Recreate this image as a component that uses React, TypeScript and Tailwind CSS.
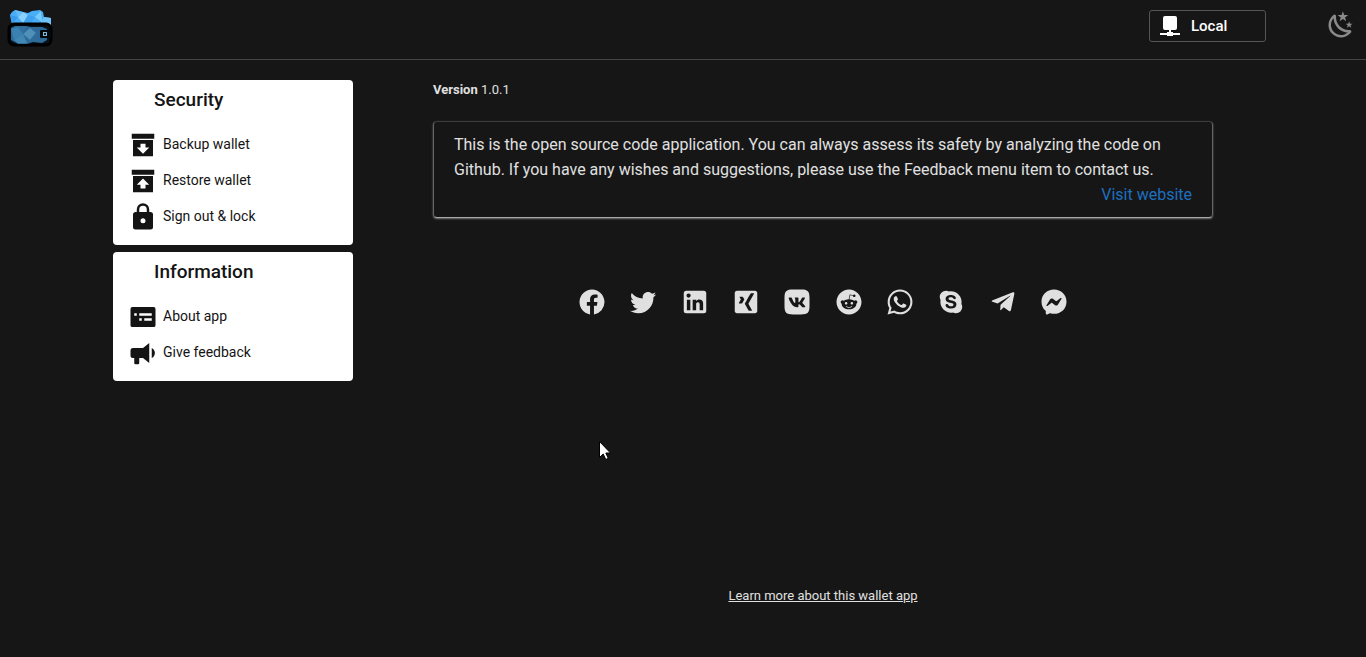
import React from "react";
import { FaTelegramPlane } from "react-icons/fa";

const paths = {
  backup: "M3 3H21V7H3V3M4 8H20V21H4V8M14 14V11H10V14H7L12 19L17 14H14Z",
  restore: "M20 21H4V8H20V21M3 3H21V7H3V3M14 18V15H17L12 10L7 15H10V18H14Z",
  lock: "M12,17A2,2 0 0,0 14,15C14,13.89 13.1,13 12,13A2,2 0 0,0 10,15A2,2 0 0,0 12,17M18,8A2,2 0 0,1 20,10V20A2,2 0 0,1 18,22H6A2,2 0 0,1 4,20V10C4,8.89 4.9,8 6,8H7V6A5,5 0 0,1 12,1A5,5 0 0,1 17,6V8H18M12,3A3,3 0 0,0 9,6V8H15V6A3,3 0 0,0 12,3Z",
  about: "M3.5 4H20.5A1.5 1.5 0 0 1 22 5.500V18.500A1.500 1.500 0 0 1 20.500 20H3.500A1.500 1.500 0 0 1 2 18.500V5.500A1.500 1.500 0 0 1 3.500 4M5 9V11H7V9H5M9 9V11H19V9H9M9 13V15H11V13H9M13 13V15H19V13H13Z",
  feedback: "M12,8H4A2,2 0 0,0 2,10V14A2,2 0 0,0 4,16H5V20A1,1 0 0,0 6,21H8A1,1 0 0,0 9,20V16H12L17,20V4L12,8M21.5,12C21.5,13.71 20.54,15.26 19,16V8C20.53,8.75 21.5,10.3 21.5,12Z",
  night: "M17.75,4.09L15.22,6.03L16.13,9.09L13.5,7.28L10.87,9.09L11.78,6.03L9.25,4.09L12.44,4L13.5,1L14.56,4L17.75,4.09M21.25,11L19.61,12.25L20.2,14.23L18.5,13.06L16.8,14.23L17.39,12.25L15.75,11L17.81,10.95L18.5,9L19.19,10.95L21.25,11M18.97,15.95C19.8,15.87 20.69,17.05 20.16,17.8C19.84,18.25 19.5,18.67 19.08,19.07C15.17,23 8.84,23 4.94,19.07C1.03,15.17 1.03,8.83 4.94,4.93C5.34,4.53 5.76,4.17 6.21,3.85C6.96,3.32 8.14,4.21 8.06,5.04C7.79,7.9 8.75,10.87 10.95,13.06C13.14,15.26 16.1,16.24 18.97,15.95M17.33,17.97C14.5,17.81 11.7,16.64 9.53,14.5C7.36,12.31 6.2,9.5 6.04,6.68C3.23,9.82 3.34,14.64 6.35,17.66C9.37,20.67 14.19,20.78 17.33,17.97Z",
  facebook: "M12 2.04C6.5 2.04 2 6.53 2 12.06C2 17.06 5.66 21.21 10.44 21.96V14.96H7.9V12.06H10.44V9.85C10.44 7.34 11.93 5.96 14.22 5.96C15.31 5.96 16.45 6.15 16.45 6.15V8.62H15.19C13.95 8.62 13.56 9.39 13.56 10.18V12.06H16.34L15.89 14.96H13.56V21.96A10 10 0 0 0 22 12.06C22 6.53 17.5 2.04 12 2.04Z",
  twitter: "M22.46,6C21.69,6.35 20.86,6.58 20,6.69C20.88,6.16 21.56,5.32 21.88,4.31C21.05,4.81 20.13,5.16 19.16,5.36C18.37,4.5 17.26,4 16,4C13.65,4 11.73,5.92 11.73,8.29C11.73,8.63 11.77,8.96 11.84,9.27C8.28,9.09 5.11,7.38 3,4.79C2.63,5.42 2.42,6.16 2.42,6.94C2.42,8.43 3.17,9.75 4.33,10.5C3.62,10.5 2.96,10.3 2.38,10C2.38,10 2.38,10 2.38,10.03C2.38,12.11 3.86,13.85 5.82,14.24C5.46,14.34 5.08,14.39 4.69,14.39C4.42,14.39 4.15,14.36 3.89,14.31C4.43,16 6,17.26 7.89,17.29C6.43,18.45 4.58,19.13 2.56,19.13C2.22,19.13 1.88,19.11 1.54,19.07C3.44,20.29 5.7,21 8.12,21C16,21 20.33,14.46 20.33,8.79C20.33,8.6 20.33,8.42 20.32,8.23C21.16,7.63 21.88,6.87 22.46,6Z",
  linkedin: "M19 3A2 2 0 0 1 21 5V19A2 2 0 0 1 19 21H5A2 2 0 0 1 3 19V5A2 2 0 0 1 5 3H19M18.5 18.5V13.2A3.26 3.26 0 0 0 15.24 9.94C14.39 9.94 13.4 10.46 12.92 11.24V10.13H10.13V18.5H12.92V13.57C12.92 12.8 13.54 12.17 14.31 12.17A1.4 1.4 0 0 1 15.71 13.57V18.5H18.5M6.88 8.56A1.68 1.68 0 0 0 8.56 6.88C8.56 5.95 7.81 5.19 6.88 5.19A1.69 1.69 0 0 0 5.19 6.88C5.19 7.81 5.95 8.56 6.88 8.56M8.27 18.5V10.13H5.5V18.5H8.27Z",
  xing: "M4.8,3C3.8,3 3,3.8 3,4.8V19.2C3,20.2 3.8,21 4.8,21H19.2C20.2,21 21,20.2 21,19.2V4.8C21,3.8 20.2,3 19.2,3M16.07,5H18.11C18.23,5 18.33,5.04 18.37,5.13C18.43,5.22 18.43,5.33 18.37,5.44L13.9,13.36L16.75,18.56C16.81,18.67 16.81,18.78 16.75,18.87C16.7,18.95 16.61,19 16.5,19H14.47C14.16,19 14,18.79 13.91,18.61L11.04,13.35C11.18,13.1 15.53,5.39 15.53,5.39C15.64,5.19 15.77,5 16.07,5M7.09,7.76H9.1C9.41,7.76 9.57,7.96 9.67,8.15L10.69,9.93C10.62,10.04 9.08,12.78 9.08,12.78C9,12.95 8.81,13.17 8.5,13.17H6.5C6.4,13.17 6.3,13.12 6.26,13.04C6.21,12.96 6.2,12.85 6.26,12.74L7.89,9.9L6.84,8.08C6.79,7.97 6.78,7.86 6.83,7.78C6.88,7.71 6.98,7.76 7.09,7.76Z",
  vk: "M15.07 2H8.93C3.33 2 2 3.33 2 8.93V15.07C2 20.67 3.33 22 8.93 22H15.07C20.67 22 22 20.67 22 15.07V8.93C22 3.33 20.67 2 15.07 2M18.15 16.27H16.69C16.14 16.27 15.97 15.82 15 14.83C14.12 14 13.74 13.88 13.53 13.88C13.24 13.88 13.15 13.96 13.15 14.38V15.69C13.15 16.04 13.04 16.26 12.11 16.26C10.57 16.26 8.86 15.32 7.66 13.59C5.85 11.05 5.36 9.13 5.36 8.75C5.36 8.54 5.43 8.34 5.85 8.34H7.32C7.69 8.34 7.83 8.5 7.97 8.9C8.69 10.97 9.89 12.8 10.38 12.8C10.57 12.8 10.65 12.71 10.65 12.25V10.1C10.6 9.12 10.07 9.03 10.07 8.68C10.07 8.5 10.21 8.34 10.44 8.34H12.73C13.04 8.34 13.15 8.5 13.15 8.88V11.77C13.15 12.08 13.28 12.19 13.38 12.19C13.56 12.19 13.72 12.08 14.05 11.74C15.1 10.57 15.85 8.76 15.85 8.76C15.95 8.55 16.11 8.35 16.5 8.35H17.93C18.37 8.35 18.47 8.58 18.37 8.89C18.19 9.74 16.41 12.25 16.43 12.25C16.27 12.5 16.21 12.61 16.43 12.9C16.58 13.11 17.09 13.55 17.43 13.94C18.05 14.65 18.53 15.24 18.66 15.65C18.77 16.06 18.57 16.27 18.15 16.27Z",
  reddit: "M14.5 15.41C14.58 15.5 14.58 15.69 14.5 15.8C13.77 16.5 12.41 16.56 12 16.56C11.61 16.56 10.25 16.5 9.54 15.8C9.44 15.69 9.44 15.5 9.54 15.41C9.65 15.31 9.82 15.31 9.92 15.41C10.38 15.87 11.33 16 12 16C12.69 16 13.66 15.87 14.1 15.41C14.21 15.31 14.38 15.31 14.5 15.41M10.75 13.04C10.75 12.47 10.28 12 9.71 12C9.14 12 8.67 12.47 8.67 13.04C8.67 13.61 9.14 14.09 9.71 14.08C10.28 14.08 10.75 13.61 10.75 13.04M14.29 12C13.72 12 13.25 12.5 13.25 13.05S13.72 14.09 14.29 14.09C14.86 14.09 15.33 13.61 15.33 13.05S14.86 12 14.29 12M22 12C22 17.5 17.5 22 12 22S2 17.5 2 12C2 6.5 6.5 2 12 2S22 6.5 22 12M18.67 12C18.67 11.19 18 10.54 17.22 10.54C16.82 10.54 16.46 10.7 16.2 10.95C15.2 10.23 13.83 9.77 12.3 9.71L12.97 6.58L15.14 7.05C15.16 7.6 15.62 8.04 16.18 8.04C16.75 8.04 17.22 7.57 17.22 7C17.22 6.43 16.75 5.96 16.18 5.96C15.77 5.96 15.41 6.2 15.25 6.55L12.82 6.03C12.75 6 12.68 6.03 12.63 6.07C12.57 6.11 12.54 6.17 12.53 6.24L11.79 9.72C10.24 9.77 8.84 10.23 7.82 10.96C7.56 10.71 7.2 10.56 6.81 10.56C6 10.56 5.35 11.21 5.35 12C5.35 12.61 5.71 13.11 6.21 13.34C6.19 13.5 6.18 13.62 6.18 13.78C6.18 16 8.79 17.85 12 17.85C15.23 17.85 17.85 16.03 17.85 13.78C17.85 13.64 17.84 13.5 17.81 13.34C18.31 13.11 18.67 12.6 18.67 12Z",
  whatsapp: "M12.04 2C6.58 2 2.13 6.45 2.13 11.91C2.13 13.66 2.59 15.36 3.45 16.86L2.05 22L7.3 20.62C8.75 21.41 10.38 21.83 12.04 21.83C17.5 21.83 21.95 17.38 21.95 11.92C21.95 9.27 20.92 6.78 19.05 4.91C17.18 3.03 14.69 2 12.04 2M12.05 3.67C14.25 3.67 16.31 4.53 17.87 6.09C19.42 7.65 20.28 9.72 20.28 11.92C20.28 16.46 16.58 20.15 12.04 20.15C10.56 20.15 9.11 19.76 7.85 19L7.55 18.83L4.43 19.65L5.26 16.61L5.06 16.29C4.24 15 3.8 13.47 3.8 11.91C3.81 7.37 7.5 3.67 12.05 3.67M8.53 7.33C8.37 7.33 8.1 7.39 7.87 7.64C7.65 7.89 7 8.5 7 9.71C7 10.93 7.89 12.1 8 12.27C8.14 12.44 9.76 14.94 12.25 16C12.84 16.27 13.3 16.42 13.66 16.53C14.25 16.72 14.79 16.69 15.22 16.63C15.7 16.56 16.68 16.03 16.89 15.45C17.1 14.87 17.1 14.38 17.04 14.27C16.97 14.17 16.81 14.11 16.56 14C16.31 13.86 15.09 13.26 14.87 13.18C14.64 13.1 14.5 13.06 14.31 13.3C14.15 13.55 13.67 14.11 13.53 14.27C13.38 14.44 13.24 14.46 13 14.34C12.74 14.21 11.94 13.95 11 13.11C10.26 12.45 9.77 11.64 9.62 11.39C9.5 11.15 9.61 11 9.73 10.89C9.84 10.78 10 10.6 10.1 10.45C10.23 10.31 10.27 10.2 10.35 10.04C10.43 9.87 10.39 9.73 10.33 9.61C10.27 9.5 9.77 8.26 9.56 7.77C9.36 7.29 9.16 7.35 9 7.34C8.86 7.34 8.7 7.33 8.53 7.33Z",
  skype: "M18,6C20.07,8.04 20.85,10.89 20.36,13.55C20.77,14.27 21,15.11 21,16A5,5 0 0,1 16,21C15.11,21 14.27,20.77 13.55,20.36C10.89,20.85 8.04,20.07 6,18C3.93,15.96 3.15,13.11 3.64,10.45C3.23,9.73 3,8.89 3,8A5,5 0 0,1 8,3C8.89,3 9.73,3.23 10.45,3.64C13.11,3.15 15.96,3.93 18,6M12.04,17.16C14.91,17.16 16.34,15.78 16.34,13.92C16.34,12.73 15.78,11.46 13.61,10.97L11.62,10.53C10.86,10.36 10,10.13 10,9.42C10,8.7 10.6,8.2 11.7,8.2C13.93,8.2 13.72,9.73 14.83,9.73C15.41,9.73 15.91,9.39 15.91,8.8C15.91,7.43 13.72,6.4 11.86,6.4C9.85,6.4 7.7,7.26 7.7,9.54C7.7,10.64 8.09,11.81 10.25,12.35L12.94,13.03C13.75,13.23 13.95,13.68 13.95,14.1C13.95,14.78 13.27,15.45 12.04,15.45C9.63,15.45 9.96,13.6 8.67,13.6C8.09,13.6 7.67,14 7.67,14.57C7.67,15.68 9,17.16 12.04,17.16Z",
  messenger: "M12,2C6.36,2 2,6.13 2,11.7C2,14.61 3.19,17.14 5.14,18.87C5.3,19 5.4,19.22 5.41,19.44L5.46,21.22C5.5,21.79 6.07,22.16 6.59,21.93L8.57,21.06C8.74,21 8.93,20.97 9.1,21C10,21.27 11,21.4 12,21.4C17.64,21.4 22,17.27 22,11.7C22,6.13 17.64,2 12,2M18,9.46L15.07,14.13C14.6,14.86 13.6,15.05 12.9,14.5L10.56,12.77C10.35,12.61 10.05,12.61 9.84,12.77L6.68,15.17C6.26,15.5 5.71,15 6,14.54L8.93,9.87C9.4,9.14 10.4,8.95 11.1,9.47L13.44,11.23C13.66,11.39 13.95,11.39 14.16,11.23L17.32,8.83C17.74,8.5 18.29,9 18,9.46Z",
};

type IconName = keyof typeof paths;

function Icon({ name }: { name: IconName }) {
  return (
    <svg viewBox="0 0 24 24" className="size-[30px] shrink-0 fill-current" aria-hidden="true">
      <path fillRule="evenodd" d={paths[name]} />
    </svg>
  );
}

function Logo() {
  return (
    <svg viewBox="0 0 48 40" className="h-10 w-12" aria-hidden="true">
      <path d="M4 6L6 3L9 1L17 3L22 4L26 2L34 1L37 3L38 8L45 9V16H6Z" fill="#4aaef7" />
      <path d="M4 6L12 8L7 14Z" fill="#3a9cec" />
      <path d="M12 8L17 3L22 6L17 14Z" fill="#8bd0fb" />
      <path d="M9 1L12 8L17 3Z" fill="#63bbfa" />
      <path d="M22 6L29 8L25 15H17Z" fill="#3fa0ee" />
      <path d="M29 8L35 2L36 13Z" fill="#7accfc" />
      <path d="M38 8L45 9V16H34Z" fill="#6fc3f7" />
      <rect x="3" y="15" width="42" height="21" rx="5" fill="#081018" stroke="#000" strokeWidth="3" />
      <path d="M5 19L9 17H20L25 18H36L41 20V31L36 34L27 33L21 35H12L5 31Z" fill="#2d6a98" />
      <path d="M5 20L12 18L17 25L8 31Z" fill="#3b82b2" />
      <path d="M17 25L24 19L30 24L24 31Z" fill="#4f8fb8" />
      <path d="M8 31L17 25L21 34H12Z" fill="#4288b5" />
      <path d="M24 31L30 24L34 32Z" fill="#2f6c9b" />
      <path d="M12 18H20L17 25Z" fill="#32719f" />
      <rect x="34" y="21" width="11" height="8" rx="1" fill="#05080b" />
      <rect x="37" y="23" width="4" height="4" fill="#78b9dc" />
      <rect x="38" y="24" width="2" height="2" fill="#10202c" />
    </svg>
  );
}

function MenuCard({ title, items }: { title: string; items: { icon: IconName; label: string }[] }) {
  return (
    <section className="rounded bg-white pb-[11px] text-[#141414]">
      <h2 className="mb-1.5 pl-[41px] text-[19px] leading-10 font-medium">{title}</h2>
      <ul>
        {items.map(({ icon, label }) => (
          <li key={label}>
            <button
              type="button"
              className="flex h-9 w-full items-center gap-[5px] pl-[15px] text-left text-sm"
            >
              <span className="pt-0.5">
                <Icon name={icon} />
              </span>
              <span>{label}</span>
            </button>
          </li>
        ))}
      </ul>
    </section>
  );
}

const socials: { name: IconName | "telegram"; label: string }[] = [
  { name: "facebook", label: "Facebook" },
  { name: "twitter", label: "Twitter" },
  { name: "linkedin", label: "LinkedIn" },
  { name: "xing", label: "Xing" },
  { name: "vk", label: "VK" },
  { name: "reddit", label: "Reddit" },
  { name: "whatsapp", label: "WhatsApp" },
  { name: "skype", label: "Skype" },
  { name: "telegram", label: "Telegram" },
  { name: "messenger", label: "Messenger" },
];

export default function App() {
  return (
    <div className="min-h-screen bg-[#161616] font-['Roboto',sans-serif] text-[#e0e0e0]">
      <header className="flex h-[60px] items-start justify-between border-b border-[#444] pr-2.5 pl-1.5">
        <a href="#" aria-label="Home" className="pt-[9px]">
          <Logo />
        </a>
        <div className="flex items-start gap-[60px] pt-2.5">
          <button
            type="button"
            className="flex h-8 w-[117px] items-center gap-[11px] rounded-[3px] border border-[#555] pl-2.5 text-[15px] font-medium text-white"
          >
            <svg viewBox="0 0 20 20" className="size-5 fill-current" aria-hidden="true">
              <rect x="3" y="0" width="14" height="14" rx="2" />
              <path d="M9 14h2v2h2v1h7v2h-7v1H7v-1H0v-2h7v-1h2Z" />
            </svg>
            <span>Local</span>
          </button>
          <button type="button" aria-label="Toggle theme" className="text-[#8a8a8a]">
            <Icon name="night" />
          </button>
        </div>
      </header>

      <div className="mx-auto flex max-w-[1140px] pt-5">
        <nav className="flex w-60 shrink-0 flex-col gap-[7px]">
          <MenuCard
            title="Security"
            items={[
              { icon: "backup", label: "Backup wallet" },
              { icon: "restore", label: "Restore wallet" },
              { icon: "lock", label: "Sign out & lock" },
            ]}
          />
          <MenuCard
            title="Information"
            items={[
              { icon: "about", label: "About app" },
              { icon: "feedback", label: "Give feedback" },
            ]}
          />
        </nav>

        <main className="flex min-w-0 flex-1 flex-col pr-10 pl-20">
          <p className="text-[13px] leading-5">
            <strong className="font-bold">Version</strong> 1.0.1
          </p>
          <section className="mt-[21px] rounded border border-t-[#3c3c3c] border-r-[#666] border-b-[#aaa] border-l-[#666] px-5 py-2.5 text-base leading-[25px] shadow-[0_1px_2px_rgba(255,255,255,0.4)]">
            <p>
              This is the open source code application. You can always assess its safety by analyzing the code on
              Github. If you have any wishes and suggestions, please use the Feedback menu item to contact us.
            </p>
            <p className="text-right">
              <a href="#" className="text-[#1f6fc0]">Visit website</a>
            </p>
          </section>
          <ul className="mt-[69px] flex w-full max-w-[492px] justify-between self-center">
            {socials.map(({ name, label }) => (
              <li key={name}>
                <a href="#" aria-label={label} className="flex size-[30px] items-center justify-center">
                  {name === "telegram" ? <FaTelegramPlane size={26} /> : <Icon name={name} />}
                </a>
              </li>
            ))}
          </ul>
          <a href="#" className="mt-[269px] self-center text-[13px] leading-5 underline">
            Learn more about this wallet app
          </a>
        </main>
      </div>

      <svg viewBox="0 0 12 19" className="pointer-events-none absolute top-[441px] left-[599px] h-[19px] w-3" aria-hidden="true">
        <path d="M.5 .5V16.500L4.200 13L6.800 18.500L9.300 17.300L6.800 12H11.500Z" fill="#fff" stroke="#000" />
      </svg>
    </div>
  );
}
